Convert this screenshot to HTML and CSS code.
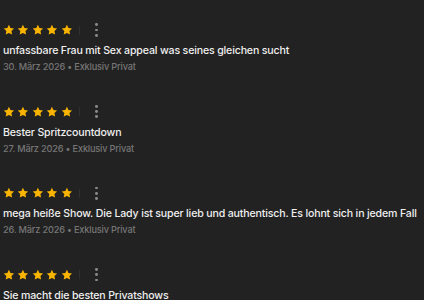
FILE: index.html
```html
<!DOCTYPE html>
<html lang="de">
<head>
<meta charset="utf-8">
<link rel="stylesheet" href="styles.css">
</head>
<body>
<div class="list">
  <div class="review">
    <div class="rating">
      <div class="stars">
        <svg class="star" viewBox="0 0 24 24"><path d="M12 1.5l3.2 6.7 7.3 1-5.3 5.1 1.3 7.3L12 18.1l-6.5 3.5 1.3-7.3-5.3-5.1 7.3-1z"/></svg>
        <svg class="star" viewBox="0 0 24 24"><path d="M12 1.5l3.2 6.7 7.3 1-5.3 5.1 1.3 7.3L12 18.1l-6.5 3.5 1.3-7.3-5.3-5.1 7.3-1z"/></svg>
        <svg class="star" viewBox="0 0 24 24"><path d="M12 1.5l3.2 6.7 7.3 1-5.3 5.1 1.3 7.3L12 18.1l-6.5 3.5 1.3-7.3-5.3-5.1 7.3-1z"/></svg>
        <svg class="star" viewBox="0 0 24 24"><path d="M12 1.5l3.2 6.7 7.3 1-5.3 5.1 1.3 7.3L12 18.1l-6.5 3.5 1.3-7.3-5.3-5.1 7.3-1z"/></svg>
        <svg class="star" viewBox="0 0 24 24"><path d="M12 1.5l3.2 6.7 7.3 1-5.3 5.1 1.3 7.3L12 18.1l-6.5 3.5 1.3-7.3-5.3-5.1 7.3-1z"/></svg>
      </div>
      <span class="sep"></span>
      <span class="more"><i></i><i></i><i></i></span>
    </div>
    <p class="text">unfassbare Frau mit Sex appeal was seines gleichen sucht</p>
    <p class="meta">30. März 2026 • Exklusiv Privat</p>
  </div>
  <div class="review">
    <div class="rating">
      <div class="stars">
        <svg class="star" viewBox="0 0 24 24"><path d="M12 1.5l3.2 6.7 7.3 1-5.3 5.1 1.3 7.3L12 18.1l-6.5 3.5 1.3-7.3-5.3-5.1 7.3-1z"/></svg>
        <svg class="star" viewBox="0 0 24 24"><path d="M12 1.5l3.2 6.7 7.3 1-5.3 5.1 1.3 7.3L12 18.1l-6.5 3.5 1.3-7.3-5.3-5.1 7.3-1z"/></svg>
        <svg class="star" viewBox="0 0 24 24"><path d="M12 1.5l3.2 6.7 7.3 1-5.3 5.1 1.3 7.3L12 18.1l-6.5 3.5 1.3-7.3-5.3-5.1 7.3-1z"/></svg>
        <svg class="star" viewBox="0 0 24 24"><path d="M12 1.5l3.2 6.7 7.3 1-5.3 5.1 1.3 7.3L12 18.1l-6.5 3.5 1.3-7.3-5.3-5.1 7.3-1z"/></svg>
        <svg class="star" viewBox="0 0 24 24"><path d="M12 1.5l3.2 6.7 7.3 1-5.3 5.1 1.3 7.3L12 18.1l-6.5 3.5 1.3-7.3-5.3-5.1 7.3-1z"/></svg>
      </div>
      <span class="sep"></span>
      <span class="more"><i></i><i></i><i></i></span>
    </div>
    <p class="text">Bester Spritzcountdown</p>
    <p class="meta">27. März 2026 • Exklusiv Privat</p>
  </div>
  <div class="review">
    <div class="rating">
      <div class="stars">
        <svg class="star" viewBox="0 0 24 24"><path d="M12 1.5l3.2 6.7 7.3 1-5.3 5.1 1.3 7.3L12 18.1l-6.5 3.5 1.3-7.3-5.3-5.1 7.3-1z"/></svg>
        <svg class="star" viewBox="0 0 24 24"><path d="M12 1.5l3.2 6.7 7.3 1-5.3 5.1 1.3 7.3L12 18.1l-6.5 3.5 1.3-7.3-5.3-5.1 7.3-1z"/></svg>
        <svg class="star" viewBox="0 0 24 24"><path d="M12 1.5l3.2 6.7 7.3 1-5.3 5.1 1.3 7.3L12 18.1l-6.5 3.5 1.3-7.3-5.3-5.1 7.3-1z"/></svg>
        <svg class="star" viewBox="0 0 24 24"><path d="M12 1.5l3.2 6.7 7.3 1-5.3 5.1 1.3 7.3L12 18.1l-6.5 3.5 1.3-7.3-5.3-5.1 7.3-1z"/></svg>
        <svg class="star" viewBox="0 0 24 24"><path d="M12 1.5l3.2 6.7 7.3 1-5.3 5.1 1.3 7.3L12 18.1l-6.5 3.5 1.3-7.3-5.3-5.1 7.3-1z"/></svg>
      </div>
      <span class="sep"></span>
      <span class="more"><i></i><i></i><i></i></span>
    </div>
    <p class="text">mega heiße Show. Die Lady ist super lieb und authentisch. Es lohnt sich in jedem Fall</p>
    <p class="meta">26. März 2026 • Exklusiv Privat</p>
  </div>
  <div class="review">
    <div class="rating">
      <div class="stars">
        <svg class="star" viewBox="0 0 24 24"><path d="M12 1.5l3.2 6.7 7.3 1-5.3 5.1 1.3 7.3L12 18.1l-6.5 3.5 1.3-7.3-5.3-5.1 7.3-1z"/></svg>
        <svg class="star" viewBox="0 0 24 24"><path d="M12 1.5l3.2 6.7 7.3 1-5.3 5.1 1.3 7.3L12 18.1l-6.5 3.5 1.3-7.3-5.3-5.1 7.3-1z"/></svg>
        <svg class="star" viewBox="0 0 24 24"><path d="M12 1.5l3.2 6.7 7.3 1-5.3 5.1 1.3 7.3L12 18.1l-6.5 3.5 1.3-7.3-5.3-5.1 7.3-1z"/></svg>
        <svg class="star" viewBox="0 0 24 24"><path d="M12 1.5l3.2 6.7 7.3 1-5.3 5.1 1.3 7.3L12 18.1l-6.5 3.5 1.3-7.3-5.3-5.1 7.3-1z"/></svg>
        <svg class="star" viewBox="0 0 24 24"><path d="M12 1.5l3.2 6.7 7.3 1-5.3 5.1 1.3 7.3L12 18.1l-6.5 3.5 1.3-7.3-5.3-5.1 7.3-1z"/></svg>
      </div>
      <span class="sep"></span>
      <span class="more"><i></i><i></i><i></i></span>
    </div>
    <p class="text">Sie macht die besten Privatshows</p>
  </div>
</div>
</body>
</html>
```

FILE: styles.css
```css
html, body {
  margin: 0;
  padding: 0;
  background: #222222;
  height: 300px;
  overflow: hidden;
}
body {
  font-family: Inter, "Liberation Sans", sans-serif;
  -webkit-font-smoothing: antialiased;
}
.list {
  display: flex;
  flex-direction: column;
  padding: 20px 0 0 3px;
}
.review {
  display: flex;
  flex-direction: column;
  height: 81.6px;
  flex-shrink: 0;
}
.rating {
  display: flex;
  align-items: center;
  height: 20px;
}
.stars {
  display: flex;
  gap: 2.6px;
}
.star {
  width: 11.8px;
  height: 11.8px;
  fill: #f8b400;
  display: block;
}
.sep {
  width: 1px;
  height: 9px;
  background: #303030;
  margin-left: 7px;
}
.more {
  display: flex;
  flex-direction: column;
  gap: 2.4px;
  margin-left: 15px;
}
.more i {
  display: block;
  width: 2.8px;
  height: 2.8px;
  border-radius: 50%;
  background: #8a8a8a;
}
.text {
  margin: 2px 0 0;
  font-size: 10.6px;
  font-weight: 500;
  letter-spacing: -0.16px;
  line-height: 18px;
  color: #efefef;
  white-space: nowrap;
}
.meta {
  margin: 0;
  font-size: 9.2px;
  font-weight: 500;
  letter-spacing: -0.18px;
  line-height: 14px;
  color: #767676;
  white-space: nowrap;
}
```
